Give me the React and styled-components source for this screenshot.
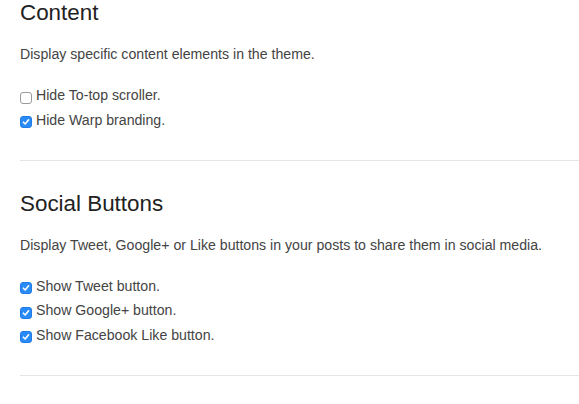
import React from "react";
import styled, { createGlobalStyle } from "styled-components";

const Global = createGlobalStyle`
  html, body { margin: 0; padding: 0; background: #fff; }
  body { font-family: "Liberation Sans", Arial, sans-serif; color: #444; }
`;

const Page = styled.div`
  padding-left: 20px;
  overflow: hidden;
`;

const Section = styled.section`
  display: flex;
  flex-direction: column;
  padding-bottom: 30px;
  border-bottom: 1px solid #e5e5e5;
  & + & { margin-top: 30px; }
`;

const Heading = styled.h3`
  margin: 0;
  font-size: 22.4px;
  line-height: 25px;
  font-weight: 400;
  color: #222;
`;

const Desc = styled.p`
  margin: 19px 0 21px;
  font-size: 14.15px;
  line-height: 20px;
`;

const Options = styled.div`
  display: flex;
  flex-direction: column;
  gap: 4.5px;
`;

const Row = styled.label`
  display: flex;
  align-items: flex-start;
  gap: 4px;
  font-size: 14.15px;
  line-height: 20px;
  color: #444;
`;

const Box = styled.span`
  flex: none;
  box-sizing: border-box;
  width: 12px;
  height: 12px;
  margin-top: 6.5px;
  border-radius: 3px;
  display: flex;
  align-items: center;
  justify-content: center;
  background: ${(p) => (p.$checked ? "#2a8bf6" : "#fff")};
  border: 1px solid ${(p) => (p.$checked ? "#1f7ce8" : "#9a9a9a")};
`;

function Check({ checked, children }) {
  return (
    <Row>
      <Box $checked={checked}>
        {checked && (
          <svg width="8" height="8" viewBox="0 0 8 8">
            <path d="M1.4 4.2 L3.2 6 L6.6 1.8" fill="none" stroke="#fff" strokeWidth="1.6" strokeLinecap="round" strokeLinejoin="round" />
          </svg>
        )}
      </Box>
      {children}
    </Row>
  );
}

export default function App() {
  return (
    <Page>
      <Global />
      <Section>
        <Heading>Content</Heading>
        <Desc>Display specific content elements in the theme.</Desc>
        <Options>
          <Check checked={false}>Hide To-top scroller.</Check>
          <Check checked>Hide Warp branding.</Check>
        </Options>
      </Section>
      <Section>
        <Heading>Social Buttons</Heading>
        <Desc>Display Tweet, Google+ or Like buttons in your posts to share them in social media.</Desc>
        <Options>
          <Check checked>Show Tweet button.</Check>
          <Check checked>Show Google+ button.</Check>
          <Check checked>Show Facebook Like button.</Check>
        </Options>
      </Section>
    </Page>
  );
}
